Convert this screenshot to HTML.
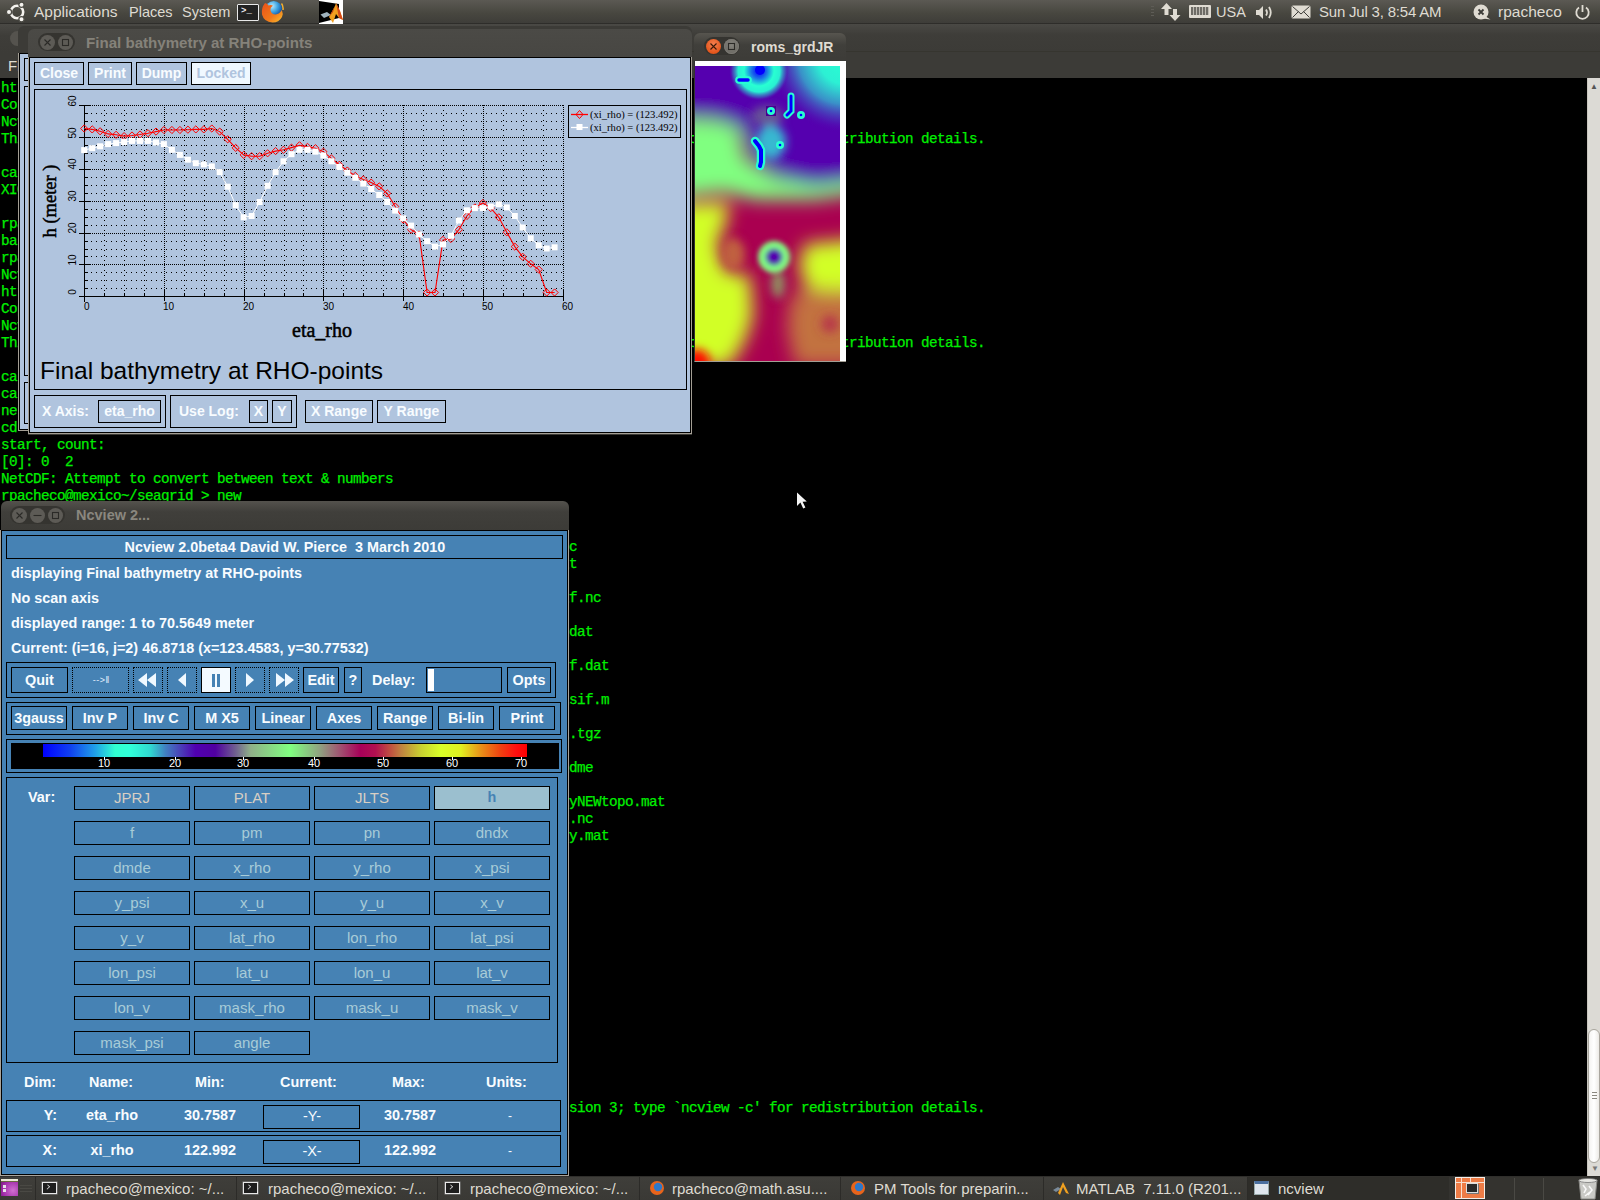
<!DOCTYPE html>
<html><head><meta charset="utf-8"><style>
*{box-sizing:border-box}
html,body{margin:0;padding:0;width:1600px;height:1200px;overflow:hidden;background:#000;position:relative;font-family:"Liberation Sans",sans-serif}
.a{position:absolute}
.tl{position:absolute;left:1px;height:17px;line-height:19px;font:14.3px "Liberation Mono",monospace;letter-spacing:-0.58px;color:#00f000;white-space:pre;-webkit-text-stroke:0.25px #00f000}
.ptx{top:2px;height:20px;line-height:20px;font-size:15.5px;color:#dfdbd2;white-space:pre;letter-spacing:0px}
.btx{top:1177px;height:23px;line-height:23px;font-size:15px;color:#dfdbd2;white-space:pre}
.tico{position:absolute;top:1182px;width:15px;height:12px;background:#1e1e1e;border:1.5px solid #e8e8e8;box-shadow:0 0 0 0.5px #888}
.tico::after{content:"";position:absolute;left:2px;top:2px;width:4px;height:3px;border-right:1px solid #ddd;border-bottom:1px solid #ddd;transform:rotate(-45deg) scale(.8)}
.wbtn{position:absolute;width:15px;height:15px;border-radius:50%;background:#5d5b56}
.wbtn svg{position:absolute;left:0;top:0}
.wtitle{font:bold 14.5px "Liberation Sans",sans-serif;line-height:18px;white-space:pre}
.xb{position:absolute;border:1px solid #000;background:#b0c4de;color:#f8fcff;font:bold 14px "Liberation Sans",sans-serif;text-align:center;line-height:21px;white-space:pre}
.grp{border:1px solid #000}
.ylab{width:16px;height:10px;transform:rotate(-90deg);font:10px "Liberation Sans",sans-serif;line-height:10px;text-align:center;color:#000}
.xlab{top:302px;font:10px "Liberation Sans",sans-serif;line-height:10px;color:#000}
.nt{font:bold 14.4px "Liberation Sans",sans-serif;color:#f8fcff;line-height:18px;white-space:pre}
.nb{position:absolute;border:1px solid #000;font:bold 14.4px "Liberation Sans",sans-serif;color:#f8fcff;text-align:center;white-space:pre;display:flex;align-items:center;justify-content:center}
.cbl{top:757px;width:24px;text-align:center;font:11px "Liberation Sans",sans-serif;color:#fff;line-height:12px}

.pill{border-radius:9px;background:#353430}

</style></head><body>
<div class="a" id="termbg" style="left:0;top:78px;width:1600px;height:1098px;background:#000"></div>
<div class="tl" style="top:80px">htt-meteora ucsd edu 80 pierce ncview home page</div>
<div class="tl" style="top:97px">Copyright (C) 1993 through 2010, David W. Pierce</div>
<div class="tl" style="top:114px">Ncview comes with ABSOLUTELY NO WARRANTY; for details type `ncview -w'.</div>
<div class="tl" style="top:131px">This is free software licensed under the GNU General Public License version 3; type `ncview -c' for redistribution details.</div>
<div class="tl" style="top:165px">calling netcdf</div>
<div class="tl" style="top:182px">XIO: fatal</div>
<div class="tl" style="top:216px">rpacheco@mexico</div>
<div class="tl" style="top:233px">bash</div>
<div class="tl" style="top:250px">rpacheco@mexico</div>
<div class="tl" style="top:267px">Ncview 2.0beta4</div>
<div class="tl" style="top:284px">htt-meteora ucsd edu 80 pierce ncview home page</div>
<div class="tl" style="top:301px">Copyright (C) 1993 through 2010, David W. Pierce</div>
<div class="tl" style="top:318px">Ncview comes with ABSOLUTELY NO WARRANTY; for details type `ncview -w'.</div>
<div class="tl" style="top:335px">This is free software licensed under the GNU General Public License version 3; type `ncview -c' for redistribution details.</div>
<div class="tl" style="top:369px">calling</div>
<div class="tl" style="top:386px">calling</div>
<div class="tl" style="top:403px">netcdf</div>
<div class="tl" style="top:420px">cd ..</div>
<div class="tl" style="top:437px">start, count:</div>
<div class="tl" style="top:454px">[0]: 0  2</div>
<div class="tl" style="top:471px">NetCDF: Attempt to convert between text &amp; numbers</div>
<div class="tl" style="top:488px">rpacheco@mexico~/seagrid &gt; new</div>
<div class="tl" style="top:539px">xxxxxxxxxxxxxxxxxxxxxxxxxxxxxxxxxxxxxxxxxxxxxxxxxxxxxxxxxxxxxxxxxxxxxxxc</div>
<div class="tl" style="top:556px">xxxxxxxxxxxxxxxxxxxxxxxxxxxxxxxxxxxxxxxxxxxxxxxxxxxxxxxxxxxxxxxxxxxxxxxt</div>
<div class="tl" style="top:590px">xxxxxxxxxxxxxxxxxxxxxxxxxxxxxxxxxxxxxxxxxxxxxxxxxxxxxxxxxxxxxxxxxxxxxxxf.nc</div>
<div class="tl" style="top:624px">xxxxxxxxxxxxxxxxxxxxxxxxxxxxxxxxxxxxxxxxxxxxxxxxxxxxxxxxxxxxxxxxxxxxxxxdat</div>
<div class="tl" style="top:658px">xxxxxxxxxxxxxxxxxxxxxxxxxxxxxxxxxxxxxxxxxxxxxxxxxxxxxxxxxxxxxxxxxxxxxxxf.dat</div>
<div class="tl" style="top:692px">xxxxxxxxxxxxxxxxxxxxxxxxxxxxxxxxxxxxxxxxxxxxxxxxxxxxxxxxxxxxxxxxxxxxxxxsif.m</div>
<div class="tl" style="top:726px">xxxxxxxxxxxxxxxxxxxxxxxxxxxxxxxxxxxxxxxxxxxxxxxxxxxxxxxxxxxxxxxxxxxxxxx.tgz</div>
<div class="tl" style="top:760px">xxxxxxxxxxxxxxxxxxxxxxxxxxxxxxxxxxxxxxxxxxxxxxxxxxxxxxxxxxxxxxxxxxxxxxxdme</div>
<div class="tl" style="top:794px">xxxxxxxxxxxxxxxxxxxxxxxxxxxxxxxxxxxxxxxxxxxxxxxxxxxxxxxxxxxxxxxxxxxxxxxyNEWtopo.mat</div>
<div class="tl" style="top:811px">xxxxxxxxxxxxxxxxxxxxxxxxxxxxxxxxxxxxxxxxxxxxxxxxxxxxxxxxxxxxxxxxxxxxxxx.nc</div>
<div class="tl" style="top:828px">xxxxxxxxxxxxxxxxxxxxxxxxxxxxxxxxxxxxxxxxxxxxxxxxxxxxxxxxxxxxxxxxxxxxxxxy.mat</div>
<div class="tl" style="top:1100px">This is free software licensed under the GNU General Public License version 3; type `ncview -c' for redistribution details.</div>

<!-- terminal window frame (background window) -->
<div class="a" style="left:0;top:24px;width:1600px;height:28px;background:linear-gradient(#4a4945,#3e3d39 40%,#3c3b37);border-bottom:1px solid #36352f"></div>
<div class="a" style="left:0;top:52px;width:1600px;height:26px;background:#3c3b37"></div>
<div class="a" style="left:8px;top:57px;height:18px;line-height:18px;font-size:15px;color:#dfdbd2">File</div>
<!-- scrollbar -->
<div class="a" style="left:1587px;top:78px;width:13px;height:1098px;background:#dcdad5;border-left:1px solid #c9c6bf"></div>
<div class="a" style="left:1588px;top:80px;width:12px;height:14px;color:#555;font-size:8px;text-align:center;line-height:14px">&#9650;</div>
<div class="a" style="left:1588px;top:1029px;width:12px;height:134px;background:linear-gradient(90deg,#f4f3f1,#fff,#eceae6);border:1px solid #a9a69e;border-radius:6px"></div>
<div class="a" style="left:1592px;top:1092px;width:5px;height:7px;background:repeating-linear-gradient(#8a877f 0 1px,transparent 1px 3px)"></div>
<div class="a" style="left:1590px;top:1163px;width:10px;height:12px;color:#777;font-size:8px;text-align:center;line-height:12px">&#9660;</div>
<!-- stacked windows behind plot window -->
<div class="a" style="left:0;top:24px;width:30px;height:29px;background:linear-gradient(#4a4945,#3e3d39 40%,#3c3b37)"></div>
<div class="a" style="left:9.5px;top:30.5px;width:15px;height:15px;border-radius:50%;background:#55534e"></div>
<div class="a" style="left:18px;top:26px;width:674px;height:405px;background:#3c3b37;border-radius:6px 6px 0 0"></div>
<div class="a" style="left:18px;top:53px;width:12px;height:378px;background:#a39e94"></div>
<div class="a" style="left:19px;top:53px;width:11px;height:377px;background:#b0c4de;border:1px solid #000;border-right:none"></div>
<div class="a" style="left:24px;top:58px;width:8px;height:23px;border:1px solid #000;border-right:none"></div>
<div class="a" style="left:24px;top:86px;width:8px;height:290px;border:1px solid #000;border-right:none"></div>
<div class="a" style="left:24px;top:382px;width:8px;height:42px;border:1px solid #000;border-right:none"></div>
<!-- PLOT WINDOW -->
<div class="a" style="left:28px;top:29px;width:664px;height:406px;background:#3c3b37;border-radius:6px 6px 0 0;background:linear-gradient(#4b4a46,#3c3b37 30%,#3c3b37)"></div>
<div class="a pill" style="left:38px;top:33px;width:37px;height:18px"></div>
<div class="wbtn" style="left:40px;top:35px"><svg width="15" height="15"><path d="M4.5 4.5l6 6M10.5 4.5l-6 6" stroke="#2b2a27" stroke-width="1.1"/></svg></div>
<div class="wbtn" style="left:58px;top:35px"><svg width="15" height="15"><rect x="4.5" y="4.5" width="6" height="6" fill="none" stroke="#2b2a27" stroke-width="1.1"/></svg></div>
<div class="a wtitle" style="left:86px;top:34px;color:#85827a;font-size:15.1px">Final bathymetry at RHO-points</div>
<div class="a" style="left:28px;top:57px;width:664px;height:377px;background:#a39e94"></div>
<div class="a" style="left:29px;top:57px;width:662px;height:376px;background:#b0c4de;border:1px solid #000"></div>
<div class="xb" style="left:34px;top:62px;width:50px;height:23px">Close</div>
<div class="xb" style="left:88px;top:62px;width:44px;height:23px">Print</div>
<div class="xb" style="left:136px;top:62px;width:51px;height:23px">Dump</div>
<div class="xb" style="left:191px;top:62px;width:60px;height:23px;background:#f0f8ff;color:#b0c4de">Locked</div>
<div class="a" style="left:34px;top:89px;width:653px;height:301px;border:1px solid #000"></div>
<svg class="a" style="left:0;top:0" width="700" height="440" viewBox="0 0 700 440" shape-rendering="crispEdges">
<line x1="86" y1="288.5" x2="564" y2="288.5" stroke="#000" stroke-width="1" stroke-dasharray="1 4"/>
<line x1="86" y1="280.5" x2="564" y2="280.5" stroke="#000" stroke-width="1" stroke-dasharray="1 4"/>
<line x1="86" y1="272.5" x2="564" y2="272.5" stroke="#000" stroke-width="1" stroke-dasharray="1 4"/>
<line x1="86" y1="264.5" x2="564" y2="264.5" stroke="#000" stroke-width="1" stroke-dasharray="1 1"/>
<line x1="86" y1="256.5" x2="564" y2="256.5" stroke="#000" stroke-width="1" stroke-dasharray="1 4"/>
<line x1="86" y1="249.5" x2="564" y2="249.5" stroke="#000" stroke-width="1" stroke-dasharray="1 4"/>
<line x1="86" y1="241.5" x2="564" y2="241.5" stroke="#000" stroke-width="1" stroke-dasharray="1 4"/>
<line x1="86" y1="233.5" x2="564" y2="233.5" stroke="#000" stroke-width="1" stroke-dasharray="1 1"/>
<line x1="86" y1="225.5" x2="564" y2="225.5" stroke="#000" stroke-width="1" stroke-dasharray="1 4"/>
<line x1="86" y1="217.5" x2="564" y2="217.5" stroke="#000" stroke-width="1" stroke-dasharray="1 4"/>
<line x1="86" y1="209.5" x2="564" y2="209.5" stroke="#000" stroke-width="1" stroke-dasharray="1 4"/>
<line x1="86" y1="201.5" x2="564" y2="201.5" stroke="#000" stroke-width="1" stroke-dasharray="1 1"/>
<line x1="86" y1="193.5" x2="564" y2="193.5" stroke="#000" stroke-width="1" stroke-dasharray="1 4"/>
<line x1="86" y1="185.5" x2="564" y2="185.5" stroke="#000" stroke-width="1" stroke-dasharray="1 4"/>
<line x1="86" y1="177.5" x2="564" y2="177.5" stroke="#000" stroke-width="1" stroke-dasharray="1 4"/>
<line x1="86" y1="169.5" x2="564" y2="169.5" stroke="#000" stroke-width="1" stroke-dasharray="1 1"/>
<line x1="86" y1="161.5" x2="564" y2="161.5" stroke="#000" stroke-width="1" stroke-dasharray="1 4"/>
<line x1="86" y1="153.5" x2="564" y2="153.5" stroke="#000" stroke-width="1" stroke-dasharray="1 4"/>
<line x1="86" y1="145.5" x2="564" y2="145.5" stroke="#000" stroke-width="1" stroke-dasharray="1 4"/>
<line x1="86" y1="137.5" x2="564" y2="137.5" stroke="#000" stroke-width="1" stroke-dasharray="1 1"/>
<line x1="86" y1="129.5" x2="564" y2="129.5" stroke="#000" stroke-width="1" stroke-dasharray="1 4"/>
<line x1="86" y1="121.5" x2="564" y2="121.5" stroke="#000" stroke-width="1" stroke-dasharray="1 4"/>
<line x1="86" y1="113.5" x2="564" y2="113.5" stroke="#000" stroke-width="1" stroke-dasharray="1 4"/>
<line x1="86" y1="105.5" x2="564" y2="105.5" stroke="#000" stroke-width="1" stroke-dasharray="1 1"/>
<line x1="104.5" y1="105" x2="104.5" y2="296" stroke="#000" stroke-width="1" stroke-dasharray="1 4"/>
<line x1="124.5" y1="105" x2="124.5" y2="296" stroke="#000" stroke-width="1" stroke-dasharray="1 4"/>
<line x1="144.5" y1="105" x2="144.5" y2="296" stroke="#000" stroke-width="1" stroke-dasharray="1 4"/>
<line x1="164.5" y1="105" x2="164.5" y2="296" stroke="#000" stroke-width="1" stroke-dasharray="1 1"/>
<line x1="184.5" y1="105" x2="184.5" y2="296" stroke="#000" stroke-width="1" stroke-dasharray="1 4"/>
<line x1="204.5" y1="105" x2="204.5" y2="296" stroke="#000" stroke-width="1" stroke-dasharray="1 4"/>
<line x1="224.5" y1="105" x2="224.5" y2="296" stroke="#000" stroke-width="1" stroke-dasharray="1 4"/>
<line x1="244.5" y1="105" x2="244.5" y2="296" stroke="#000" stroke-width="1" stroke-dasharray="1 1"/>
<line x1="264.5" y1="105" x2="264.5" y2="296" stroke="#000" stroke-width="1" stroke-dasharray="1 4"/>
<line x1="284.5" y1="105" x2="284.5" y2="296" stroke="#000" stroke-width="1" stroke-dasharray="1 4"/>
<line x1="303.5" y1="105" x2="303.5" y2="296" stroke="#000" stroke-width="1" stroke-dasharray="1 4"/>
<line x1="323.5" y1="105" x2="323.5" y2="296" stroke="#000" stroke-width="1" stroke-dasharray="1 1"/>
<line x1="343.5" y1="105" x2="343.5" y2="296" stroke="#000" stroke-width="1" stroke-dasharray="1 4"/>
<line x1="363.5" y1="105" x2="363.5" y2="296" stroke="#000" stroke-width="1" stroke-dasharray="1 4"/>
<line x1="383.5" y1="105" x2="383.5" y2="296" stroke="#000" stroke-width="1" stroke-dasharray="1 4"/>
<line x1="403.5" y1="105" x2="403.5" y2="296" stroke="#000" stroke-width="1" stroke-dasharray="1 1"/>
<line x1="423.5" y1="105" x2="423.5" y2="296" stroke="#000" stroke-width="1" stroke-dasharray="1 4"/>
<line x1="443.5" y1="105" x2="443.5" y2="296" stroke="#000" stroke-width="1" stroke-dasharray="1 4"/>
<line x1="463.5" y1="105" x2="463.5" y2="296" stroke="#000" stroke-width="1" stroke-dasharray="1 4"/>
<line x1="483.5" y1="105" x2="483.5" y2="296" stroke="#000" stroke-width="1" stroke-dasharray="1 1"/>
<line x1="503.5" y1="105" x2="503.5" y2="296" stroke="#000" stroke-width="1" stroke-dasharray="1 4"/>
<line x1="523.5" y1="105" x2="523.5" y2="296" stroke="#000" stroke-width="1" stroke-dasharray="1 4"/>
<line x1="543.5" y1="105" x2="543.5" y2="296" stroke="#000" stroke-width="1" stroke-dasharray="1 4"/>
<line x1="563.5" y1="105" x2="563.5" y2="296" stroke="#000" stroke-width="1" stroke-dasharray="1 1"/>
<rect x="84" y="105" width="1" height="197" fill="#000"/>
<rect x="79" y="296" width="485" height="1" fill="#000"/>
<rect x="84" y="288" width="4" height="1" fill="#000"/>
<rect x="84" y="280" width="4" height="1" fill="#000"/>
<rect x="84" y="272" width="4" height="1" fill="#000"/>
<rect x="79" y="264" width="12" height="1" fill="#000"/>
<rect x="84" y="256" width="4" height="1" fill="#000"/>
<rect x="84" y="249" width="4" height="1" fill="#000"/>
<rect x="84" y="241" width="4" height="1" fill="#000"/>
<rect x="79" y="233" width="12" height="1" fill="#000"/>
<rect x="84" y="225" width="4" height="1" fill="#000"/>
<rect x="84" y="217" width="4" height="1" fill="#000"/>
<rect x="84" y="209" width="4" height="1" fill="#000"/>
<rect x="79" y="201" width="12" height="1" fill="#000"/>
<rect x="84" y="193" width="4" height="1" fill="#000"/>
<rect x="84" y="185" width="4" height="1" fill="#000"/>
<rect x="84" y="177" width="4" height="1" fill="#000"/>
<rect x="79" y="169" width="12" height="1" fill="#000"/>
<rect x="84" y="161" width="4" height="1" fill="#000"/>
<rect x="84" y="153" width="4" height="1" fill="#000"/>
<rect x="84" y="145" width="4" height="1" fill="#000"/>
<rect x="79" y="137" width="12" height="1" fill="#000"/>
<rect x="84" y="129" width="4" height="1" fill="#000"/>
<rect x="84" y="121" width="4" height="1" fill="#000"/>
<rect x="84" y="113" width="4" height="1" fill="#000"/>
<rect x="79" y="105" width="12" height="1" fill="#000"/>
<rect x="84" y="290" width="1" height="11" fill="#000"/>
<rect x="104" y="293" width="1" height="4" fill="#000"/>
<rect x="124" y="293" width="1" height="4" fill="#000"/>
<rect x="144" y="293" width="1" height="4" fill="#000"/>
<rect x="164" y="290" width="1" height="11" fill="#000"/>
<rect x="184" y="293" width="1" height="4" fill="#000"/>
<rect x="204" y="293" width="1" height="4" fill="#000"/>
<rect x="224" y="293" width="1" height="4" fill="#000"/>
<rect x="244" y="290" width="1" height="11" fill="#000"/>
<rect x="264" y="293" width="1" height="4" fill="#000"/>
<rect x="284" y="293" width="1" height="4" fill="#000"/>
<rect x="303" y="293" width="1" height="4" fill="#000"/>
<rect x="323" y="290" width="1" height="11" fill="#000"/>
<rect x="343" y="293" width="1" height="4" fill="#000"/>
<rect x="363" y="293" width="1" height="4" fill="#000"/>
<rect x="383" y="293" width="1" height="4" fill="#000"/>
<rect x="403" y="290" width="1" height="11" fill="#000"/>
<rect x="423" y="293" width="1" height="4" fill="#000"/>
<rect x="443" y="293" width="1" height="4" fill="#000"/>
<rect x="463" y="293" width="1" height="4" fill="#000"/>
<rect x="483" y="290" width="1" height="11" fill="#000"/>
<rect x="503" y="293" width="1" height="4" fill="#000"/>
<rect x="523" y="293" width="1" height="4" fill="#000"/>
<rect x="543" y="293" width="1" height="4" fill="#000"/>
<rect x="563" y="290" width="1" height="11" fill="#000"/>
</svg>
<svg class="a" style="left:0;top:0" width="700" height="440" viewBox="0 0 700 440">
<polyline points="84.2,128.5 92.2,129.4 100.1,131.3 108.1,133.9 116.1,134.8 124.1,136.1 132.0,135.5 140.0,134.5 148.0,133.2 156.0,131.6 163.9,130.0 171.9,130.0 179.9,130.0 187.9,129.7 195.8,129.4 203.8,129.4 211.8,128.5 219.7,131.6 227.7,139.3 235.7,147.9 243.7,154.9 251.6,156.2 259.6,156.2 267.6,153.3 275.6,151.1 283.5,149.8 291.5,147.6 299.5,145.3 307.5,146.9 315.4,148.2 323.4,151.7 331.4,158.4 339.3,164.8 347.3,170.5 355.3,175.9 363.3,179.4 371.2,182.6 379.2,186.4 387.2,193.4 395.2,206.5 403.1,219.5 411.1,229.7 419.1,234.5 427.1,292.5 435.0,292.5 443.0,239.9 451.0,239.0 458.9,229.7 466.9,216.0 474.9,207.4 482.9,203.0 490.8,208.1 498.8,217.3 506.8,232.3 514.8,246.6 522.7,256.8 530.7,263.8 538.7,269.5 546.7,292.5 554.6,292.5" fill="none" stroke="#f00" stroke-width="1.1"/>
<path d="M84.2 124.9l3.6 3.6l-3.6 3.6l-3.6 -3.6z" fill="none" stroke="#f00" stroke-width="1"/>
<path d="M92.2 125.8l3.6 3.6l-3.6 3.6l-3.6 -3.6z" fill="none" stroke="#f00" stroke-width="1"/>
<path d="M100.1 127.7l3.6 3.6l-3.6 3.6l-3.6 -3.6z" fill="none" stroke="#f00" stroke-width="1"/>
<path d="M108.1 130.3l3.6 3.6l-3.6 3.6l-3.6 -3.6z" fill="none" stroke="#f00" stroke-width="1"/>
<path d="M116.1 131.2l3.6 3.6l-3.6 3.6l-3.6 -3.6z" fill="none" stroke="#f00" stroke-width="1"/>
<path d="M124.1 132.5l3.6 3.6l-3.6 3.6l-3.6 -3.6z" fill="none" stroke="#f00" stroke-width="1"/>
<path d="M132.0 131.9l3.6 3.6l-3.6 3.6l-3.6 -3.6z" fill="none" stroke="#f00" stroke-width="1"/>
<path d="M140.0 130.9l3.6 3.6l-3.6 3.6l-3.6 -3.6z" fill="none" stroke="#f00" stroke-width="1"/>
<path d="M148.0 129.6l3.6 3.6l-3.6 3.6l-3.6 -3.6z" fill="none" stroke="#f00" stroke-width="1"/>
<path d="M156.0 128.0l3.6 3.6l-3.6 3.6l-3.6 -3.6z" fill="none" stroke="#f00" stroke-width="1"/>
<path d="M163.9 126.4l3.6 3.6l-3.6 3.6l-3.6 -3.6z" fill="none" stroke="#f00" stroke-width="1"/>
<path d="M171.9 126.4l3.6 3.6l-3.6 3.6l-3.6 -3.6z" fill="none" stroke="#f00" stroke-width="1"/>
<path d="M179.9 126.4l3.6 3.6l-3.6 3.6l-3.6 -3.6z" fill="none" stroke="#f00" stroke-width="1"/>
<path d="M187.9 126.1l3.6 3.6l-3.6 3.6l-3.6 -3.6z" fill="none" stroke="#f00" stroke-width="1"/>
<path d="M195.8 125.8l3.6 3.6l-3.6 3.6l-3.6 -3.6z" fill="none" stroke="#f00" stroke-width="1"/>
<path d="M203.8 125.8l3.6 3.6l-3.6 3.6l-3.6 -3.6z" fill="none" stroke="#f00" stroke-width="1"/>
<path d="M211.8 124.9l3.6 3.6l-3.6 3.6l-3.6 -3.6z" fill="none" stroke="#f00" stroke-width="1"/>
<path d="M219.7 128.0l3.6 3.6l-3.6 3.6l-3.6 -3.6z" fill="none" stroke="#f00" stroke-width="1"/>
<path d="M227.7 135.7l3.6 3.6l-3.6 3.6l-3.6 -3.6z" fill="none" stroke="#f00" stroke-width="1"/>
<path d="M235.7 144.3l3.6 3.6l-3.6 3.6l-3.6 -3.6z" fill="none" stroke="#f00" stroke-width="1"/>
<path d="M243.7 151.3l3.6 3.6l-3.6 3.6l-3.6 -3.6z" fill="none" stroke="#f00" stroke-width="1"/>
<path d="M251.6 152.6l3.6 3.6l-3.6 3.6l-3.6 -3.6z" fill="none" stroke="#f00" stroke-width="1"/>
<path d="M259.6 152.6l3.6 3.6l-3.6 3.6l-3.6 -3.6z" fill="none" stroke="#f00" stroke-width="1"/>
<path d="M267.6 149.7l3.6 3.6l-3.6 3.6l-3.6 -3.6z" fill="none" stroke="#f00" stroke-width="1"/>
<path d="M275.6 147.5l3.6 3.6l-3.6 3.6l-3.6 -3.6z" fill="none" stroke="#f00" stroke-width="1"/>
<path d="M283.5 146.2l3.6 3.6l-3.6 3.6l-3.6 -3.6z" fill="none" stroke="#f00" stroke-width="1"/>
<path d="M291.5 144.0l3.6 3.6l-3.6 3.6l-3.6 -3.6z" fill="none" stroke="#f00" stroke-width="1"/>
<path d="M299.5 141.7l3.6 3.6l-3.6 3.6l-3.6 -3.6z" fill="none" stroke="#f00" stroke-width="1"/>
<path d="M307.5 143.3l3.6 3.6l-3.6 3.6l-3.6 -3.6z" fill="none" stroke="#f00" stroke-width="1"/>
<path d="M315.4 144.6l3.6 3.6l-3.6 3.6l-3.6 -3.6z" fill="none" stroke="#f00" stroke-width="1"/>
<path d="M323.4 148.1l3.6 3.6l-3.6 3.6l-3.6 -3.6z" fill="none" stroke="#f00" stroke-width="1"/>
<path d="M331.4 154.8l3.6 3.6l-3.6 3.6l-3.6 -3.6z" fill="none" stroke="#f00" stroke-width="1"/>
<path d="M339.3 161.2l3.6 3.6l-3.6 3.6l-3.6 -3.6z" fill="none" stroke="#f00" stroke-width="1"/>
<path d="M347.3 166.9l3.6 3.6l-3.6 3.6l-3.6 -3.6z" fill="none" stroke="#f00" stroke-width="1"/>
<path d="M355.3 172.3l3.6 3.6l-3.6 3.6l-3.6 -3.6z" fill="none" stroke="#f00" stroke-width="1"/>
<path d="M363.3 175.8l3.6 3.6l-3.6 3.6l-3.6 -3.6z" fill="none" stroke="#f00" stroke-width="1"/>
<path d="M371.2 179.0l3.6 3.6l-3.6 3.6l-3.6 -3.6z" fill="none" stroke="#f00" stroke-width="1"/>
<path d="M379.2 182.8l3.6 3.6l-3.6 3.6l-3.6 -3.6z" fill="none" stroke="#f00" stroke-width="1"/>
<path d="M387.2 189.8l3.6 3.6l-3.6 3.6l-3.6 -3.6z" fill="none" stroke="#f00" stroke-width="1"/>
<path d="M395.2 202.9l3.6 3.6l-3.6 3.6l-3.6 -3.6z" fill="none" stroke="#f00" stroke-width="1"/>
<path d="M403.1 215.9l3.6 3.6l-3.6 3.6l-3.6 -3.6z" fill="none" stroke="#f00" stroke-width="1"/>
<path d="M411.1 226.1l3.6 3.6l-3.6 3.6l-3.6 -3.6z" fill="none" stroke="#f00" stroke-width="1"/>
<path d="M419.1 230.9l3.6 3.6l-3.6 3.6l-3.6 -3.6z" fill="none" stroke="#f00" stroke-width="1"/>
<path d="M427.1 288.9l3.6 3.6l-3.6 3.6l-3.6 -3.6z" fill="none" stroke="#f00" stroke-width="1"/>
<path d="M435.0 288.9l3.6 3.6l-3.6 3.6l-3.6 -3.6z" fill="none" stroke="#f00" stroke-width="1"/>
<path d="M443.0 236.3l3.6 3.6l-3.6 3.6l-3.6 -3.6z" fill="none" stroke="#f00" stroke-width="1"/>
<path d="M451.0 235.4l3.6 3.6l-3.6 3.6l-3.6 -3.6z" fill="none" stroke="#f00" stroke-width="1"/>
<path d="M458.9 226.1l3.6 3.6l-3.6 3.6l-3.6 -3.6z" fill="none" stroke="#f00" stroke-width="1"/>
<path d="M466.9 212.4l3.6 3.6l-3.6 3.6l-3.6 -3.6z" fill="none" stroke="#f00" stroke-width="1"/>
<path d="M474.9 203.8l3.6 3.6l-3.6 3.6l-3.6 -3.6z" fill="none" stroke="#f00" stroke-width="1"/>
<path d="M482.9 199.4l3.6 3.6l-3.6 3.6l-3.6 -3.6z" fill="none" stroke="#f00" stroke-width="1"/>
<path d="M490.8 204.5l3.6 3.6l-3.6 3.6l-3.6 -3.6z" fill="none" stroke="#f00" stroke-width="1"/>
<path d="M498.8 213.7l3.6 3.6l-3.6 3.6l-3.6 -3.6z" fill="none" stroke="#f00" stroke-width="1"/>
<path d="M506.8 228.7l3.6 3.6l-3.6 3.6l-3.6 -3.6z" fill="none" stroke="#f00" stroke-width="1"/>
<path d="M514.8 243.0l3.6 3.6l-3.6 3.6l-3.6 -3.6z" fill="none" stroke="#f00" stroke-width="1"/>
<path d="M522.7 253.2l3.6 3.6l-3.6 3.6l-3.6 -3.6z" fill="none" stroke="#f00" stroke-width="1"/>
<path d="M530.7 260.2l3.6 3.6l-3.6 3.6l-3.6 -3.6z" fill="none" stroke="#f00" stroke-width="1"/>
<path d="M538.7 265.9l3.6 3.6l-3.6 3.6l-3.6 -3.6z" fill="none" stroke="#f00" stroke-width="1"/>
<path d="M546.7 288.9l3.6 3.6l-3.6 3.6l-3.6 -3.6z" fill="none" stroke="#f00" stroke-width="1"/>
<path d="M554.6 288.9l3.6 3.6l-3.6 3.6l-3.6 -3.6z" fill="none" stroke="#f00" stroke-width="1"/>
<polyline points="84.2,150.1 92.2,148.2 100.1,146.3 108.1,144.1 116.1,143.1 124.1,142.1 132.0,140.9 140.0,140.9 148.0,140.9 156.0,142.5 163.9,144.1 171.9,149.8 179.9,154.9 187.9,159.7 195.8,163.2 203.8,164.4 211.8,166.4 219.7,172.1 227.7,186.7 235.7,205.2 243.7,217.3 251.6,216.0 259.6,202.0 267.6,185.8 275.6,172.1 283.5,161.3 291.5,154.2 299.5,149.8 307.5,149.8 315.4,151.7 323.4,155.5 331.4,161.3 339.3,167.0 347.3,172.7 355.3,177.8 363.3,183.6 371.2,189.0 379.2,195.0 387.2,202.0 395.2,210.6 403.1,218.3 411.1,225.6 419.1,234.5 427.1,241.2 435.0,246.6 443.0,244.4 451.0,235.8 458.9,220.5 466.9,210.3 474.9,208.1 482.9,208.1 490.8,206.5 498.8,204.3 506.8,207.4 514.8,216.0 522.7,227.5 530.7,238.3 538.7,245.3 546.7,248.5 554.6,247.3" fill="none" stroke="#fff" stroke-width="1"/>
<rect x="81.2" y="147.1" width="6" height="6" fill="#fff"/>
<rect x="89.2" y="145.2" width="6" height="6" fill="#fff"/>
<rect x="97.1" y="143.3" width="6" height="6" fill="#fff"/>
<rect x="105.1" y="141.1" width="6" height="6" fill="#fff"/>
<rect x="113.1" y="140.1" width="6" height="6" fill="#fff"/>
<rect x="121.1" y="139.1" width="6" height="6" fill="#fff"/>
<rect x="129.0" y="137.9" width="6" height="6" fill="#fff"/>
<rect x="137.0" y="137.9" width="6" height="6" fill="#fff"/>
<rect x="145.0" y="137.9" width="6" height="6" fill="#fff"/>
<rect x="153.0" y="139.5" width="6" height="6" fill="#fff"/>
<rect x="160.9" y="141.1" width="6" height="6" fill="#fff"/>
<rect x="168.9" y="146.8" width="6" height="6" fill="#fff"/>
<rect x="176.9" y="151.9" width="6" height="6" fill="#fff"/>
<rect x="184.9" y="156.7" width="6" height="6" fill="#fff"/>
<rect x="192.8" y="160.2" width="6" height="6" fill="#fff"/>
<rect x="200.8" y="161.4" width="6" height="6" fill="#fff"/>
<rect x="208.8" y="163.4" width="6" height="6" fill="#fff"/>
<rect x="216.7" y="169.1" width="6" height="6" fill="#fff"/>
<rect x="224.7" y="183.7" width="6" height="6" fill="#fff"/>
<rect x="232.7" y="202.2" width="6" height="6" fill="#fff"/>
<rect x="240.7" y="214.3" width="6" height="6" fill="#fff"/>
<rect x="248.6" y="213.0" width="6" height="6" fill="#fff"/>
<rect x="256.6" y="199.0" width="6" height="6" fill="#fff"/>
<rect x="264.6" y="182.8" width="6" height="6" fill="#fff"/>
<rect x="272.6" y="169.1" width="6" height="6" fill="#fff"/>
<rect x="280.5" y="158.3" width="6" height="6" fill="#fff"/>
<rect x="288.5" y="151.2" width="6" height="6" fill="#fff"/>
<rect x="296.5" y="146.8" width="6" height="6" fill="#fff"/>
<rect x="304.5" y="146.8" width="6" height="6" fill="#fff"/>
<rect x="312.4" y="148.7" width="6" height="6" fill="#fff"/>
<rect x="320.4" y="152.5" width="6" height="6" fill="#fff"/>
<rect x="328.4" y="158.3" width="6" height="6" fill="#fff"/>
<rect x="336.3" y="164.0" width="6" height="6" fill="#fff"/>
<rect x="344.3" y="169.7" width="6" height="6" fill="#fff"/>
<rect x="352.3" y="174.8" width="6" height="6" fill="#fff"/>
<rect x="360.3" y="180.6" width="6" height="6" fill="#fff"/>
<rect x="368.2" y="186.0" width="6" height="6" fill="#fff"/>
<rect x="376.2" y="192.0" width="6" height="6" fill="#fff"/>
<rect x="384.2" y="199.0" width="6" height="6" fill="#fff"/>
<rect x="392.2" y="207.6" width="6" height="6" fill="#fff"/>
<rect x="400.1" y="215.3" width="6" height="6" fill="#fff"/>
<rect x="408.1" y="222.6" width="6" height="6" fill="#fff"/>
<rect x="416.1" y="231.5" width="6" height="6" fill="#fff"/>
<rect x="424.1" y="238.2" width="6" height="6" fill="#fff"/>
<rect x="432.0" y="243.6" width="6" height="6" fill="#fff"/>
<rect x="440.0" y="241.4" width="6" height="6" fill="#fff"/>
<rect x="448.0" y="232.8" width="6" height="6" fill="#fff"/>
<rect x="455.9" y="217.5" width="6" height="6" fill="#fff"/>
<rect x="463.9" y="207.3" width="6" height="6" fill="#fff"/>
<rect x="471.9" y="205.1" width="6" height="6" fill="#fff"/>
<rect x="479.9" y="205.1" width="6" height="6" fill="#fff"/>
<rect x="487.8" y="203.5" width="6" height="6" fill="#fff"/>
<rect x="495.8" y="201.3" width="6" height="6" fill="#fff"/>
<rect x="503.8" y="204.4" width="6" height="6" fill="#fff"/>
<rect x="511.8" y="213.0" width="6" height="6" fill="#fff"/>
<rect x="519.7" y="224.5" width="6" height="6" fill="#fff"/>
<rect x="527.7" y="235.3" width="6" height="6" fill="#fff"/>
<rect x="535.7" y="242.3" width="6" height="6" fill="#fff"/>
<rect x="543.7" y="245.5" width="6" height="6" fill="#fff"/>
<rect x="551.6" y="244.3" width="6" height="6" fill="#fff"/>
<rect x="568.5" y="105.5" width="112" height="32" fill="none" stroke="#000" stroke-width="1"/>
<line x1="571" y1="114.5" x2="588" y2="114.5" stroke="#f00" stroke-width="1.3"/>
<path d="M579.5 110.5l3.5 4l-3.5 4l-3.5 -4z" fill="none" stroke="#f00" stroke-width="1"/>
<line x1="571" y1="127.5" x2="588" y2="127.5" stroke="#fff" stroke-width="1.3"/>
<rect x="576.5" y="124" width="6" height="6" fill="#fff"/>
</svg><div class="a ylab" style="left:65px;top:96px">60</div>
<div class="a ylab" style="left:65px;top:128px">50</div>
<div class="a ylab" style="left:65px;top:159px">40</div>
<div class="a ylab" style="left:65px;top:191px">30</div>
<div class="a ylab" style="left:65px;top:223px">20</div>
<div class="a ylab" style="left:65px;top:255px">10</div>
<div class="a ylab" style="left:65px;top:287px">0</div>
<div class="a xlab" style="left:84px">0</div>
<div class="a xlab" style="left:163px">10</div>
<div class="a xlab" style="left:243px">20</div>
<div class="a xlab" style="left:323px">30</div>
<div class="a xlab" style="left:403px">40</div>
<div class="a xlab" style="left:482px">50</div>
<div class="a xlab" style="left:562px">60</div>
<div class="a" style="left:590px;top:107.5px;width:95px;font:10.6px 'Liberation Serif',serif;line-height:13px;color:#000;white-space:pre">(xi_rho) = (123.492)<br>(xi_rho) = (123.492)</div>
<div class="a" style="left:0;top:160px;width:100px;height:80px;"><div style="position:absolute;left:0;top:0;width:100px;height:80px"></div></div>
<div class="a" style="left:2px;top:188px;width:96px;height:26px;transform:rotate(-90deg);text-align:center;font:18.5px 'Liberation Serif',serif;-webkit-text-stroke:0.5px #000;color:#000;line-height:26px;white-space:pre">h (meter )</div>
<div class="a" style="left:262px;top:318px;width:120px;text-align:center;font:20px 'Liberation Serif',serif;-webkit-text-stroke:0.5px #000;color:#000;line-height:24px">eta_rho</div>
<div class="a" style="left:40px;top:356px;font:24.5px 'Liberation Sans',sans-serif;color:#000;line-height:30px;white-space:pre">Final bathymetry at RHO-points</div>
<div class="a grp" style="left:34px;top:395px;width:132px;height:33px"></div>
<div class="a" style="left:42px;top:403px;height:22px;line-height:22px;font:bold 14px 'Liberation Sans';color:#f8fcff">X Axis:</div>
<div class="xb" style="left:98px;top:400px;width:63px;height:23px">eta_rho</div>
<div class="a grp" style="left:170px;top:395px;width:127px;height:33px"></div>
<div class="a" style="left:179px;top:403px;height:22px;line-height:22px;font:bold 14px 'Liberation Sans';color:#f8fcff">Use Log:</div>
<div class="xb" style="left:249px;top:400px;width:19px;height:23px">X</div>
<div class="xb" style="left:272px;top:400px;width:20px;height:23px">Y</div>
<div class="xb" style="left:305px;top:400px;width:68px;height:23px">X Range</div>
<div class="xb" style="left:377px;top:400px;width:69px;height:23px">Y Range</div>
<!-- ROMS WINDOW -->
<div class="a" style="left:694px;top:33px;width:152px;height:30px;border-radius:6px 6px 0 0;background:linear-gradient(#57554f,#403f3b 40%,#3c3b37)"></div>
<div class="a pill" style="left:704px;top:37px;width:36px;height:18px"></div>
<div class="wbtn" style="left:706px;top:39px;background:radial-gradient(circle at 50% 35%,#f58050,#e4561c 70%,#c94a15)"><svg width="15" height="15"><path d="M4.5 4.5l6 6M10.5 4.5l-6 6" stroke="#3a1a0a" stroke-width="1.1"/></svg></div>
<div class="wbtn" style="left:724px;top:39px;background:radial-gradient(circle at 50% 35%,#85837d,#64625c);box-shadow:inset 0 0 0 1px #7a7872"><svg width="15" height="15"><rect x="4.5" y="4.5" width="6" height="6" fill="none" stroke="#2b2a27" stroke-width="1.1"/></svg></div>
<div class="a wtitle" style="left:751px;top:38px;color:#dfdbd2;font-size:14px">roms_grdJR</div>
<div class="a" style="left:694px;top:61px;width:152px;height:301px;background:#fff;border-left:1px solid #333;border-bottom:1px solid #a39e94"></div>
<svg class="a" style="left:695px;top:66px" width="145" height="295" viewBox="0 0 145 295">
<defs>
 <filter id="b8" x="-40%" y="-40%" width="180%" height="180%"><feGaussianBlur stdDeviation="9"/></filter>
 <filter id="b5" x="-40%" y="-40%" width="180%" height="180%"><feGaussianBlur stdDeviation="5"/></filter>
 <filter id="b3" x="-40%" y="-40%" width="180%" height="180%"><feGaussianBlur stdDeviation="2.5"/></filter>
 <filter id="b1" x="-40%" y="-40%" width="180%" height="180%"><feGaussianBlur stdDeviation="0.6"/></filter>
 <clipPath id="rc"><rect width="145" height="295"/></clipPath>
 <radialGradient id="gc" gradientUnits="userSpaceOnUse" cx="150" cy="-8" r="75"><stop offset="0" stop-color="#28ffd2"/><stop offset="0.35" stop-color="#2cf0d4"/><stop offset="0.62" stop-color="#3a90c8"/><stop offset="0.85" stop-color="#4a30b8" stop-opacity="0.6"/><stop offset="1" stop-color="#5500af" stop-opacity="0"/></radialGradient>
 <radialGradient id="gr" gradientUnits="userSpaceOnUse" cx="64" cy="5" r="30"><stop offset="0" stop-color="#0000ff"/><stop offset="0.25" stop-color="#1a70e8"/><stop offset="0.5" stop-color="#28ffd2"/><stop offset="0.7" stop-color="#28f0d2"/><stop offset="0.88" stop-color="#4060c0" stop-opacity="0.7"/><stop offset="1" stop-color="#5500af" stop-opacity="0"/></radialGradient>
</defs>
<g clip-path="url(#rc)">
<rect width="145" height="295" fill="#aa0050"/>
<g filter="url(#b8)">
 <path d="M-30 -30 L175 -30 L175 118 L120 122 L80 110 L58 92 L46 62 L20 52 L-30 50Z" fill="#5500af"/>
 <path d="M-30 52 L20 54 L44 62 L50 92 L80 112 L120 120 L175 114 L175 126 L120 134 L60 134 L30 126 L-30 132Z" fill="#80ff80"/>
 <path d="M-30 138 L35 136 L30 160 L22 178 L30 205 L55 210 L58 250 L50 275 L35 300 L-30 300Z" fill="#d2ff28"/>
 <path d="M110 178 L175 172 L175 225 L112 224 L104 200Z" fill="#d2ff28"/>
 <path d="M96 228 L175 222 L175 300 L100 300 L92 262Z" fill="#c27240"/>
</g>
<g filter="url(#b5)">
 <ellipse cx="38" cy="188" rx="12" ry="16" fill="#c06040"/>
 <circle cx="135" cy="258" r="9" fill="#b83a4a"/>
 <circle cx="2" cy="296" r="13" fill="#ff1000"/>
 <ellipse cx="83" cy="218" rx="7" ry="14" fill="#909060"/>
 <ellipse cx="72" cy="50" rx="16" ry="10" fill="#6a6a90" opacity="0.8"/>
 <ellipse cx="76" cy="76" rx="15" ry="17" fill="#38b8d0"/>
</g>
<circle cx="150" cy="-8" r="75" fill="url(#gc)"/>
<circle cx="64" cy="5" r="30" fill="url(#gr)"/>
<g filter="url(#b3)">
 <circle cx="79" cy="191" r="16" fill="#80ff80"/>
 <circle cx="79" cy="191" r="8.5" fill="#5500af"/>
</g>
<g filter="url(#b1)">
 <circle cx="65" cy="4" r="5" fill="#0000ff"/>
 <path d="M44 14 h9" stroke="#28ffd2" stroke-width="7.5" stroke-linecap="round"/>
 <path d="M44 14 h9" stroke="#0000ff" stroke-width="3.5" stroke-linecap="round"/>
 <path d="M96 30 v15 l-4 4" stroke="#28ffd2" stroke-width="7" stroke-linecap="round" fill="none"/>
 <path d="M96 30 v15 l-4 4" stroke="#0000ff" stroke-width="3" stroke-linecap="round" fill="none"/>
 <rect x="71" y="40" width="10" height="10" fill="#4a0090"/>
 <circle cx="76" cy="45" r="4" fill="#28ffd2"/><circle cx="76" cy="45" r="1.3" fill="#0000ff"/>
 <circle cx="106" cy="49" r="4" fill="#28ffd2"/><circle cx="106" cy="49" r="1.3" fill="#0000ff"/>
 <circle cx="85" cy="79" r="4" fill="#28ffd2"/><circle cx="85" cy="79" r="1.3" fill="#0000ff"/>
 <path d="M60 75 l4 5 l2 4 v12 l-1 4" stroke="#28ffd2" stroke-width="8.5" stroke-linecap="round" fill="none"/>
 <path d="M60 75 l4 5 l2 4 v12 l-1 4" stroke="#0000ff" stroke-width="4" stroke-linecap="round" fill="none"/>
</g>
</g>
</svg>
<!-- NCVIEW WINDOW -->
<div class="a" style="left:1px;top:501px;width:568px;height:31px;border-radius:6px 6px 0 0;background:linear-gradient(#54524d,#403f3b 35%,#3c3b37)"></div>
<div class="a pill" style="left:10px;top:506px;width:55px;height:18px"></div>
<div class="wbtn" style="left:12.0px;top:508px"><svg width="15" height="15"><path d="M4.5 4.5l6 6M10.5 4.5l-6 6" stroke="#2b2a27" stroke-width="1.1"/></svg></div>
<div class="wbtn" style="left:30.0px;top:508px"><svg width="15" height="15"><path d="M3.5 7.5h8" stroke="#2b2a27" stroke-width="1.1"/></svg></div>
<div class="wbtn" style="left:48.0px;top:508px"><svg width="15" height="15"><rect x="4.5" y="4.5" width="6" height="6" fill="none" stroke="#2b2a27" stroke-width="1.1"/></svg></div>
<div class="a wtitle" style="left:76px;top:506px;color:#8a877f">Ncview 2...</div>
<div class="a" style="left:0;top:530px;width:569px;height:646px;background:#a9a49b"></div>
<div class="a" style="left:1px;top:530px;width:567px;height:645px;background:#4682b4;border:1px solid #000"></div>
<div class="a" style="left:6px;top:535px;width:557px;height:24px;border:1px solid #000;"></div>
<div class="a nt" style="left:6px;top:538px;width:558px;text-align:center">Ncview 2.0beta4 David W. Pierce&nbsp; 3 March 2010</div>
<div class="a nt" style="left:11px;top:564px;">displaying Final bathymetry at RHO-points</div>
<div class="a nt" style="left:11px;top:589px;">No scan axis</div>
<div class="a nt" style="left:11px;top:614px;">displayed range: 1 to 70.5649 meter</div>
<div class="a nt" style="left:11px;top:639px;">Current: (i=16, j=2) 46.8718 (x=123.4583, y=30.77532)</div>
<div class="a" style="left:6px;top:662px;width:550px;height:36px;border:1px solid #000;"></div>
<div class="nb" style="left:11px;top:667px;width:57px;height:26px;line-height:24px;">Quit</div>
<div class="nb" style="left:72px;top:667px;width:57px;height:26px;line-height:24px;border-style:dotted;color:#e6f2ff"><span style="font-size:9px;font-weight:normal;letter-spacing:-1px">- - &gt; &#8214;</span></div>
<div class="nb" style="left:133px;top:667px;width:30px;height:26px;line-height:24px;border-style:dotted"><svg width="22" height="14" viewBox="0 0 22 14"><path d="M1 7L10 0V14Z M10 7L19 0V14Z" fill="#f0f8ff"/></svg></div>
<div class="nb" style="left:167px;top:667px;width:30px;height:26px;line-height:24px;border-style:dotted"><svg width="12" height="14" viewBox="0 0 12 14"><path d="M2 7L10 0V14Z" fill="#f0f8ff"/></svg></div>
<div class="nb" style="left:201px;top:667px;width:30px;height:26px;line-height:24px;background:#f4faff"><svg width="14" height="14" viewBox="0 0 14 14"><path d="M3 1h3v13h-3z M8 1h3v13h-3z" fill="#4682b4"/></svg></div>
<div class="nb" style="left:235px;top:667px;width:30px;height:26px;line-height:24px;border-style:dotted"><svg width="12" height="14" viewBox="0 0 12 14"><path d="M10 7L2 0V14Z" fill="#f0f8ff"/></svg></div>
<div class="nb" style="left:269px;top:667px;width:30px;height:26px;line-height:24px;border-style:dotted"><svg width="22" height="14" viewBox="0 0 22 14"><path d="M21 7L12 0V14Z M12 7L3 0V14Z" fill="#f0f8ff"/></svg></div>
<div class="nb" style="left:303px;top:667px;width:36px;height:26px;line-height:24px;">Edit</div>
<div class="nb" style="left:344px;top:667px;width:18px;height:26px;line-height:24px;">?</div>
<div class="a nt" style="left:372px;top:671px;">Delay:</div>
<div class="a" style="left:426px;top:667px;width:76px;height:26px;border:1px solid #000;"></div>
<div class="a" style="left:428px;top:669px;width:6px;height:22px;background:#fff"></div>
<div class="nb" style="left:507px;top:667px;width:44px;height:26px;line-height:24px;">Opts</div>
<div class="a" style="left:6px;top:702px;width:555px;height:33px;border:1px solid #000;"></div>
<div class="nb" style="left:11px;top:706px;width:56px;height:24px;line-height:22px;line-height:21px">3gauss</div>
<div class="nb" style="left:72px;top:706px;width:56px;height:24px;line-height:22px;line-height:21px">Inv P</div>
<div class="nb" style="left:133px;top:706px;width:56px;height:24px;line-height:22px;line-height:21px">Inv C</div>
<div class="nb" style="left:194px;top:706px;width:56px;height:24px;line-height:22px;line-height:21px">M X5</div>
<div class="nb" style="left:255px;top:706px;width:56px;height:24px;line-height:22px;line-height:21px">Linear</div>
<div class="nb" style="left:316px;top:706px;width:56px;height:24px;line-height:22px;line-height:21px">Axes</div>
<div class="nb" style="left:377px;top:706px;width:56px;height:24px;line-height:22px;line-height:21px">Range</div>
<div class="nb" style="left:438px;top:706px;width:56px;height:24px;line-height:22px;line-height:21px">Bi-lin</div>
<div class="nb" style="left:499px;top:706px;width:56px;height:24px;line-height:22px;line-height:21px">Print</div>
<div class="a" style="left:6px;top:739px;width:556px;height:34px;border:1px solid #000;"></div>
<div class="a" style="left:11px;top:743px;width:548px;height:26px;background:#000"></div>
<div class="a" style="left:43px;top:744px;width:484px;height:13px;background:linear-gradient(90deg,#0000ff 0%,#1040f0 5.6%,#20a0e8 10.8%,#30ffd0 14.9%,#30ffd8 18%,#30d8d0 22.2%,#4080c0 25.3%,#4a40b8 28.4%,#5000b0 31.5%,#5000a0 35.6%,#706090 39.8%,#90b088 42.9%,#80ff80 51.1%,#90a080 57.3%,#a05070 61.5%,#a80058 65.6%,#b01050 68.7%,#c05040 71.8%,#c08040 73.9%,#c8d030 78.1%,#d8ff28 82.2%,#e0f020 86.3%,#e89018 90.5%,#f04010 94.6%,#ff1010 97.7%,#ff0000 100%)"></div>
<div class="a" style="left:104px;top:757px;width:1px;height:3px;background:#fff"></div>
<div class="a cbl" style="left:92px">10</div>
<div class="a" style="left:175px;top:757px;width:1px;height:3px;background:#fff"></div>
<div class="a cbl" style="left:163px">20</div>
<div class="a" style="left:243px;top:757px;width:1px;height:3px;background:#fff"></div>
<div class="a cbl" style="left:231px">30</div>
<div class="a" style="left:314px;top:757px;width:1px;height:3px;background:#fff"></div>
<div class="a cbl" style="left:302px">40</div>
<div class="a" style="left:383px;top:757px;width:1px;height:3px;background:#fff"></div>
<div class="a cbl" style="left:371px">50</div>
<div class="a" style="left:452px;top:757px;width:1px;height:3px;background:#fff"></div>
<div class="a cbl" style="left:440px">60</div>
<div class="a" style="left:521px;top:757px;width:1px;height:3px;background:#fff"></div>
<div class="a cbl" style="left:509px">70</div>
<div class="a" style="left:6px;top:777px;width:552px;height:286px;border:1px solid #000;"></div>
<div class="a nt" style="left:28px;top:788px;">Var:</div>
<div class="nb" style="left:74px;top:786px;width:116px;height:24px;line-height:22px;color:#d8cfc4;font-weight:normal;font-size:15px;line-height:21px;padding-bottom:2px">JPRJ</div>
<div class="nb" style="left:194px;top:786px;width:116px;height:24px;line-height:22px;color:#d8cfc4;font-weight:normal;font-size:15px;line-height:21px;padding-bottom:2px">PLAT</div>
<div class="nb" style="left:314px;top:786px;width:116px;height:24px;line-height:22px;color:#d8cfc4;font-weight:normal;font-size:15px;line-height:21px;padding-bottom:2px">JLTS</div>
<div class="nb" style="left:434px;top:786px;width:116px;height:24px;line-height:22px;background:#9bbfcf;color:#4682b4;line-height:21px;padding-bottom:2px">h</div>
<div class="nb" style="left:74px;top:821px;width:116px;height:24px;line-height:22px;color:#a8ccd8;font-weight:normal;font-size:15px;line-height:21px;padding-bottom:2px">f</div>
<div class="nb" style="left:194px;top:821px;width:116px;height:24px;line-height:22px;color:#a8ccd8;font-weight:normal;font-size:15px;line-height:21px;padding-bottom:2px">pm</div>
<div class="nb" style="left:314px;top:821px;width:116px;height:24px;line-height:22px;color:#a8ccd8;font-weight:normal;font-size:15px;line-height:21px;padding-bottom:2px">pn</div>
<div class="nb" style="left:434px;top:821px;width:116px;height:24px;line-height:22px;color:#a8ccd8;font-weight:normal;font-size:15px;line-height:21px;padding-bottom:2px">dndx</div>
<div class="nb" style="left:74px;top:856px;width:116px;height:24px;line-height:22px;color:#a8ccd8;font-weight:normal;font-size:15px;line-height:21px;padding-bottom:2px">dmde</div>
<div class="nb" style="left:194px;top:856px;width:116px;height:24px;line-height:22px;color:#a8ccd8;font-weight:normal;font-size:15px;line-height:21px;padding-bottom:2px">x_rho</div>
<div class="nb" style="left:314px;top:856px;width:116px;height:24px;line-height:22px;color:#a8ccd8;font-weight:normal;font-size:15px;line-height:21px;padding-bottom:2px">y_rho</div>
<div class="nb" style="left:434px;top:856px;width:116px;height:24px;line-height:22px;color:#a8ccd8;font-weight:normal;font-size:15px;line-height:21px;padding-bottom:2px">x_psi</div>
<div class="nb" style="left:74px;top:891px;width:116px;height:24px;line-height:22px;color:#a8ccd8;font-weight:normal;font-size:15px;line-height:21px;padding-bottom:2px">y_psi</div>
<div class="nb" style="left:194px;top:891px;width:116px;height:24px;line-height:22px;color:#a8ccd8;font-weight:normal;font-size:15px;line-height:21px;padding-bottom:2px">x_u</div>
<div class="nb" style="left:314px;top:891px;width:116px;height:24px;line-height:22px;color:#a8ccd8;font-weight:normal;font-size:15px;line-height:21px;padding-bottom:2px">y_u</div>
<div class="nb" style="left:434px;top:891px;width:116px;height:24px;line-height:22px;color:#a8ccd8;font-weight:normal;font-size:15px;line-height:21px;padding-bottom:2px">x_v</div>
<div class="nb" style="left:74px;top:926px;width:116px;height:24px;line-height:22px;color:#a8ccd8;font-weight:normal;font-size:15px;line-height:21px;padding-bottom:2px">y_v</div>
<div class="nb" style="left:194px;top:926px;width:116px;height:24px;line-height:22px;color:#a8ccd8;font-weight:normal;font-size:15px;line-height:21px;padding-bottom:2px">lat_rho</div>
<div class="nb" style="left:314px;top:926px;width:116px;height:24px;line-height:22px;color:#a8ccd8;font-weight:normal;font-size:15px;line-height:21px;padding-bottom:2px">lon_rho</div>
<div class="nb" style="left:434px;top:926px;width:116px;height:24px;line-height:22px;color:#a8ccd8;font-weight:normal;font-size:15px;line-height:21px;padding-bottom:2px">lat_psi</div>
<div class="nb" style="left:74px;top:961px;width:116px;height:24px;line-height:22px;color:#a8ccd8;font-weight:normal;font-size:15px;line-height:21px;padding-bottom:2px">lon_psi</div>
<div class="nb" style="left:194px;top:961px;width:116px;height:24px;line-height:22px;color:#a8ccd8;font-weight:normal;font-size:15px;line-height:21px;padding-bottom:2px">lat_u</div>
<div class="nb" style="left:314px;top:961px;width:116px;height:24px;line-height:22px;color:#a8ccd8;font-weight:normal;font-size:15px;line-height:21px;padding-bottom:2px">lon_u</div>
<div class="nb" style="left:434px;top:961px;width:116px;height:24px;line-height:22px;color:#a8ccd8;font-weight:normal;font-size:15px;line-height:21px;padding-bottom:2px">lat_v</div>
<div class="nb" style="left:74px;top:996px;width:116px;height:24px;line-height:22px;color:#a8ccd8;font-weight:normal;font-size:15px;line-height:21px;padding-bottom:2px">lon_v</div>
<div class="nb" style="left:194px;top:996px;width:116px;height:24px;line-height:22px;color:#a8ccd8;font-weight:normal;font-size:15px;line-height:21px;padding-bottom:2px">mask_rho</div>
<div class="nb" style="left:314px;top:996px;width:116px;height:24px;line-height:22px;color:#a8ccd8;font-weight:normal;font-size:15px;line-height:21px;padding-bottom:2px">mask_u</div>
<div class="nb" style="left:434px;top:996px;width:116px;height:24px;line-height:22px;color:#a8ccd8;font-weight:normal;font-size:15px;line-height:21px;padding-bottom:2px">mask_v</div>
<div class="nb" style="left:74px;top:1031px;width:116px;height:24px;line-height:22px;color:#a8ccd8;font-weight:normal;font-size:15px;line-height:21px;padding-bottom:2px">mask_psi</div>
<div class="nb" style="left:194px;top:1031px;width:116px;height:24px;line-height:22px;color:#a8ccd8;font-weight:normal;font-size:15px;line-height:21px;padding-bottom:2px">angle</div>
<div class="a nt" style="left:24px;top:1073px;">Dim:</div>
<div class="a nt" style="left:89px;top:1073px;">Name:</div>
<div class="a nt" style="left:195px;top:1073px;">Min:</div>
<div class="a nt" style="left:280px;top:1073px;">Current:</div>
<div class="a nt" style="left:392px;top:1073px;">Max:</div>
<div class="a nt" style="left:486px;top:1073px;">Units:</div>
<div class="a" style="left:6px;top:1100px;width:555px;height:32px;border:1px solid #000;"></div>
<div class="a" style="left:6px;top:1135px;width:555px;height:32px;border:1px solid #000;"></div>
<div class="a nt" style="left:17px;top:1106px;width:40px;text-align:right">Y:</div>
<div class="a nt" style="left:62px;top:1106px;width:100px;text-align:center">eta_rho</div>
<div class="a nt" style="left:160px;top:1106px;width:100px;text-align:center">30.7587</div>
<div class="a" style="left:263px;top:1105px;width:97px;height:24px;border:1px solid #000;"></div>
<div class="a nt" style="left:263px;top:1107px;width:98px;text-align:center;font-weight:normal">-Y-</div>
<div class="a nt" style="left:360px;top:1106px;width:100px;text-align:center">30.7587</div>
<div class="a nt" style="left:460px;top:1107px;width:100px;text-align:center;font-weight:normal;font-size:12px">-</div>
<div class="a nt" style="left:17px;top:1141px;width:40px;text-align:right">X:</div>
<div class="a nt" style="left:62px;top:1141px;width:100px;text-align:center">xi_rho</div>
<div class="a nt" style="left:160px;top:1141px;width:100px;text-align:center">122.992</div>
<div class="a" style="left:263px;top:1140px;width:97px;height:24px;border:1px solid #000;"></div>
<div class="a nt" style="left:263px;top:1142px;width:98px;text-align:center;font-weight:normal">-X-</div>
<div class="a nt" style="left:360px;top:1141px;width:100px;text-align:center">122.992</div>
<div class="a nt" style="left:460px;top:1142px;width:100px;text-align:center;font-weight:normal;font-size:12px">-</div><!-- TOP PANEL -->
<div class="a" style="left:0;top:0;width:1600px;height:24px;background:linear-gradient(#5b5953,#47463f 60%,#3e3d39);border-bottom:1px solid #2e2d2a"></div>
<svg class="a" style="left:5px;top:1px" width="24" height="22" viewBox="0 0 24 22">
 <circle cx="12" cy="11" r="6.2" fill="none" stroke="#f4f2ee" stroke-width="2.6"/>
 <circle cx="4" cy="11" r="2.6" fill="#f4f2ee" stroke="#4c4b45" stroke-width="1.2"/>
 <circle cx="16.5" cy="3.8" r="2.6" fill="#f4f2ee" stroke="#4c4b45" stroke-width="1.2"/>
 <circle cx="16.5" cy="18.2" r="2.6" fill="#f4f2ee" stroke="#4c4b45" stroke-width="1.2"/>
</svg>
<div class="a ptx" style="left:34px">Applications</div>
<div class="a ptx" style="left:129px;font-size:14.5px">Places</div>
<div class="a ptx" style="left:182px;font-size:14.5px">System</div>
<!-- terminal launcher -->
<div class="a" style="left:237px;top:4px;width:22px;height:17px;background:#222;border:1.5px solid #e8e8e8;border-radius:1px"></div>
<div class="a" style="left:241px;top:6px;font:bold 9px 'Liberation Mono';color:#eee">&gt;_</div>
<!-- firefox -->
<svg class="a" style="left:260px;top:0" width="24" height="24" viewBox="0 0 24 24">
 <defs><radialGradient id="ffg" cx="0.4" cy="0.3" r="0.7"><stop offset="0" stop-color="#b8ecff"/><stop offset="0.5" stop-color="#3aa0e0"/><stop offset="1" stop-color="#0a3a8a"/></radialGradient>
 <linearGradient id="ffo" x1="0" y1="0" x2="1" y2="1"><stop offset="0" stop-color="#e8501a"/><stop offset="0.6" stop-color="#f07a1a"/><stop offset="1" stop-color="#f8c030"/></linearGradient></defs>
 <circle cx="13.7" cy="9.5" r="8.6" fill="url(#ffg)"/>
 <path d="M5 3 Q8 3.5 8.5 5.5 Q11 4.5 13 5.8 Q10 7.5 10.5 10.5 Q11.5 14.5 15.5 14.5 Q19.5 14 21.8 10 Q23.5 13.5 22 17 Q19 22.5 12.5 22.5 Q4 22 2 14.5 Q1 8 5 3Z" fill="url(#ffo)"/><path d="M21.5 3.5 Q23.5 6 23 10" stroke="#f4b030" stroke-width="1.5" fill="none"/>
</svg>
<!-- matlab -->
<div class="a" style="left:319px;top:0;width:24px;height:24px;background:#fff"></div>
<svg class="a" style="left:319px;top:0" width="24" height="24" viewBox="0 0 24 24">
 <path d="M0 1 L20 4 L20 18 L0 23 Z" fill="#000"/>
 <path d="M1.5 14.5 L8 12 L12 15 L5 18Z" fill="#9fb2bc"/>
 <path d="M10 17 L16 6 L17 3 L21 11 L24 20 L20 18 L17 14 L14 23Z" fill="#f0a020"/>
 <path d="M17 3 L21 11 L24 20 L20 18Z" fill="#d44a18"/>
 <path d="M10 17 L16 6 L14 12Z" fill="#c04010"/>
</svg>
<!-- right side indicators -->
<svg class="a" style="left:1160px;top:3px" width="22" height="19" viewBox="0 0 22 19">
 <path d="M6.5 0 L12 6 L8.5 6 L8.5 12 L4.5 12 L4.5 6 L1 6Z" fill="#dfdbd2"/>
 <path d="M15 18 L20.5 12 L17 12 L17 6 L13 6 L13 12 L9.5 12Z" fill="#dfdbd2"/>
</svg>
<div class="a" style="left:1189px;top:5px;width:22px;height:13px;background:#dfdbd2;border-radius:1px"></div>
<div class="a" style="left:1191px;top:7px;width:18px;height:8px;background:repeating-linear-gradient(90deg,#6e6c66 0 2px,#bdbab2 2px 3px)"></div>
<div class="a ptx" style="left:1216px;font-size:14.5px">USA</div>
<div class="a" style="left:1151px;top:6px;width:3px;height:12px;background:repeating-linear-gradient(#5e5c56 0 1px,transparent 1px 3px)"></div>
<svg class="a" style="left:1256px;top:5px" width="18" height="15" viewBox="0 0 18 15">
 <path d="M0 5 L3 5 L7 1 L7 14 L3 10 L0 10Z" fill="#dfdbd2"/>
 <path d="M10 4.5 Q12 7.5 10 10.5" stroke="#dfdbd2" stroke-width="1.8" fill="none"/>
 <path d="M13 2 Q16.5 7.5 13 13" stroke="#dfdbd2" stroke-width="1.8" fill="none"/>
</svg>
<svg class="a" style="left:1291px;top:5px" width="20" height="14" viewBox="0 0 20 14">
 <rect x="0.5" y="0.5" width="19" height="13" rx="1.5" fill="#dfdbd2"/>
 <path d="M1.5 1.5 L10 9 L18.5 1.5 M1.5 12.5 L7.5 6.5 M18.5 12.5 L12.5 6.5" stroke="#3c3b37" stroke-width="1" fill="none"/>
</svg>
<div class="a ptx" style="left:1319px;font-size:15px;letter-spacing:-0.2px">Sun Jul 3, 8:54 AM</div>
<svg class="a" style="left:1473px;top:4px" width="19" height="17" viewBox="0 0 19 17">
 <circle cx="8" cy="8" r="7.5" fill="#dfdbd2"/>
 <path d="M12 12 L17.5 15.5 L10 14.5Z" fill="#dfdbd2"/>
 <path d="M5.5 5.5 L10.5 10.5 M10.5 5.5 L5.5 10.5" stroke="#3c3b37" stroke-width="1.8"/>
</svg>
<div class="a ptx" style="left:1498px">rpacheco</div>
<svg class="a" style="left:1574px;top:4px" width="17" height="17" viewBox="0 0 17 17">
 <path d="M5 3.5 A6.2 6.2 0 1 0 12 3.5" stroke="#dfdbd2" stroke-width="1.8" fill="none"/>
 <path d="M8.5 1 L8.5 8" stroke="#dfdbd2" stroke-width="1.8"/>
</svg>

<!-- BOTTOM PANEL -->
<div class="a" style="left:0;top:1176px;width:1600px;height:24px;background:linear-gradient(#3f3e3a,#3a3935);border-top:1px solid #2f2e2b"></div>
<div class="a" style="left:1px;top:1182px;width:17px;height:14px;background:radial-gradient(circle at 70% 60%,#d070d0,#a02ca8 70%,#7a1a80)"></div>
<div class="a" style="left:1px;top:1179px;width:17px;height:3px;background:#ecebd8;border-bottom:1px solid #6a6a40"></div>
<div class="a" style="left:3px;top:1185px;width:3px;height:3px;background:#e8e0e8"></div>
<div class="a" style="left:3px;top:1189px;width:3px;height:3px;background:#e8e0e8"></div>
<div class="a" style="left:20px;top:1185px;width:12px;height:8px;background:repeating-linear-gradient(#4a4944 0 1px,transparent 1px 3px)"></div>
<div class="a" style="left:35px;top:1177px;width:1px;height:23px;background:#2c2b28"></div>
<div class="a" style="left:236px;top:1177px;width:1px;height:23px;background:#2c2b28"></div>
<div class="a" style="left:437px;top:1177px;width:1px;height:23px;background:#2c2b28"></div>
<div class="a" style="left:639px;top:1177px;width:1px;height:23px;background:#2c2b28"></div>
<div class="a" style="left:840px;top:1177px;width:1px;height:23px;background:#2c2b28"></div>
<div class="a" style="left:1043px;top:1177px;width:1px;height:23px;background:#2c2b28"></div>
<div class="a" style="left:1247px;top:1177px;width:1px;height:23px;background:#2c2b28"></div>
<div class="a" style="left:1248px;top:1177px;width:201px;height:23px;background:#2e2d29"></div>
<div class="tico" style="left:42px"></div>
<div class="a btx" style="left:66px">rpacheco@mexico: ~/...</div>
<div class="tico" style="left:243px"></div>
<div class="a btx" style="left:268px">rpacheco@mexico: ~/...</div>
<div class="tico" style="left:445px"></div>
<div class="a btx" style="left:470px">rpacheco@mexico: ~/...</div>
<svg class="a" style="left:649px;top:1180px" width="16" height="16" viewBox="0 0 16 16"><circle cx="8" cy="8" r="7" fill="#e8641b"/><circle cx="9" cy="7" r="4.2" fill="#2f78c8"/></svg>
<div class="a btx" style="left:672px">rpacheco@math.asu....</div>
<svg class="a" style="left:850px;top:1180px" width="16" height="16" viewBox="0 0 16 16"><circle cx="8" cy="8" r="7" fill="#e8641b"/><circle cx="9" cy="7" r="4.2" fill="#2f78c8"/></svg>
<div class="a btx" style="left:874px">PM Tools for preparin...</div>
<svg class="a" style="left:1052px;top:1180px" width="18" height="16" viewBox="0 0 18 16"><path d="M1 10 L6 7 L9 9 L4 12Z" fill="#7a8a9a"/><path d="M6 13 L11 2 L17 14 L14 13 L11 7 L8 15Z" fill="#f0a020"/></svg>
<div class="a btx" style="left:1076px">MATLAB&nbsp; 7.11.0 (R201...</div>
<div class="a" style="left:1254px;top:1181px;width:15px;height:14px;background:#dfe6ee;border:1px solid #9aa;border-top:3px solid #4a6fa0"></div>
<div class="a btx" style="left:1278px">ncview</div>
<div class="a" style="left:1449px;top:1177px;width:151px;height:23px;background:#34332f"></div>
<div class="a" style="left:1455px;top:1177px;width:30px;height:22px;background:#ee7c46;border:1px solid #f4eee8"></div>
<div class="a" style="left:1456px;top:1182px;width:28px;height:1px;background:#f8e0d0"></div>
<div class="a" style="left:1470px;top:1178px;width:1px;height:5px;background:#f8e0d0"></div>
<div class="a" style="left:1461px;top:1178px;width:1px;height:20px;background:#f8e0d0"></div>
<div class="a" style="left:1466px;top:1183px;width:12px;height:10px;background:#2a2a2a;border:1px solid #ddd;box-shadow:1px 1px 0 #777"></div>
<div class="a" style="left:1514px;top:1178px;width:1px;height:22px;background:#4a4944"></div>
<div class="a" style="left:1543px;top:1178px;width:1px;height:22px;background:#4a4944"></div>
<svg class="a" style="left:1577px;top:1177px" width="22" height="23" viewBox="0 0 22 23"><path d="M2 3 L20 3 L18 22 L4 22Z" fill="#c9c9c5" stroke="#8a8a86" stroke-width="1"/><ellipse cx="11" cy="3.5" rx="9" ry="2" fill="#e8e8e4" stroke="#777" stroke-width="0.8"/><path d="M6 8 L9 12 L7 16 M12 9 L15 13 L11 18 M8 19 L13 15" stroke="#f8f8f8" stroke-width="1.6" fill="none"/></svg>
<svg class="a" style="left:790px;top:488px" width="24" height="26" viewBox="790 488 24 26"><path d="M797 492.5 L797 506 L800.4 502.6 L803.2 508.6 L805.4 507.6 L802.6 501.8 L806.8 501.6 Z" fill="#f4f4f4"/></svg>

</body></html>
